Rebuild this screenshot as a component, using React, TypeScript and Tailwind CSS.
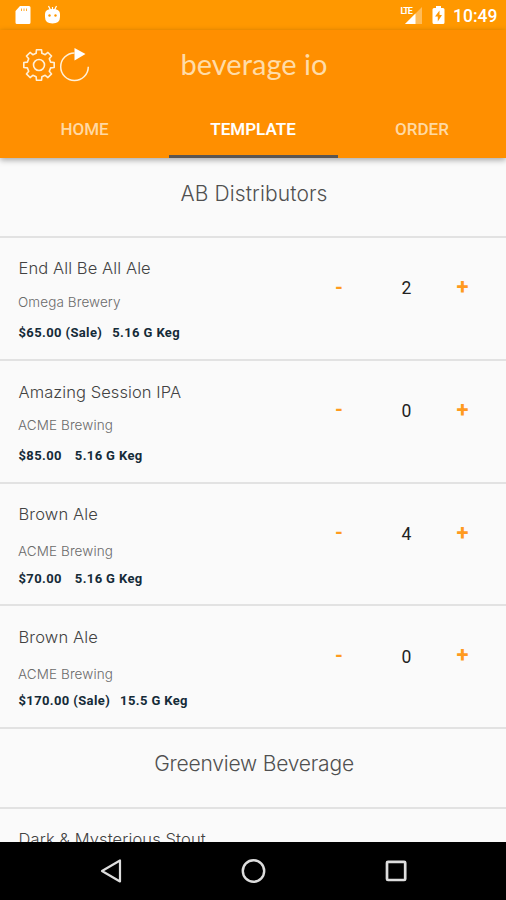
import React from 'react';

interface Beverage {
  id: string;
  name: string;
  brewery: string;
  price: string;
  size: string;
  quantity: number;
  nameClass: string;
  breweryClass: string;
  gapClass: string;
}

const beverages: Beverage[] = [
  { id: 'bev-1', name: 'End All Be All Ale', brewery: 'Omega Brewery', price: '$65.00 (Sale)', size: '5.16 G Keg', quantity: 2, nameClass: 'tracking-[0.1px]', breweryClass: 'mt-[14px] mb-[13px]', gapClass: 'gap-[10px]' },
  { id: 'bev-2', name: 'Amazing Session IPA', brewery: 'ACME Brewing', price: '$85.00', size: '5.16 G Keg', quantity: 0, nameClass: 'tracking-[0.07px] pt-px', breweryClass: 'mt-[13px] mb-[13px]', gapClass: 'gap-[13px]' },
  { id: 'bev-3', name: 'Brown Ale', brewery: 'ACME Brewing', price: '$70.00', size: '5.16 G Keg', quantity: 4, nameClass: 'tracking-[0.15px]', breweryClass: 'mt-[17px] mb-2.5', gapClass: 'gap-[13px]' },
  { id: 'bev-4', name: 'Brown Ale', brewery: 'ACME Brewing', price: '$170.00 (Sale)', size: '15.5 G Keg', quantity: 0, nameClass: 'tracking-[0.15px] pt-px', breweryClass: 'mt-[17px] mb-[9px]', gapClass: 'gap-[10px]' },
];

const tabs = ['HOME', 'TEMPLATE', 'ORDER'];

// Outline of an eight-toothed gear around (17, 17)
const gearPath = () => {
  const points: string[] = [];
  for (let i = 0; i < 8; i++) {
    [[-14, 12], [-9.5, 15.4], [9.5, 15.4], [14, 12]].forEach(([deg, r]) => {
      const a = ((i * 45 + deg - 90) * Math.PI) / 180;
      points.push(`${(17 + r * Math.cos(a)).toFixed(2)} ${(17 + r * Math.sin(a)).toFixed(2)}`);
    });
  }
  return `M${points.join('L')}Z`;
};

const StatusBar: React.FC = () => (
  <div className="flex h-[30px] shrink-0 items-center bg-[#ff9800] pl-[15px] pr-[9px] text-white">
    {/* SD card */}
    <svg width="16" height="20" viewBox="0 0 16 20" fill="currentColor">
      <path d="M5 1h9a1.500 1.500 0 0 1 1.500 1.500v15a1.500 1.500 0 0 1-1.500 1.500H2a1.500 1.500 0 0 1-1.500-1.500V6z" />
      <path d="M6.500 3.500v2.500M9 3.500v2.500M11.500 3.500v2.500" stroke="#ff9800" strokeWidth="1" opacity=".8" />
    </svg>
    {/* Debug robot */}
    <svg className="ml-[13px]" width="17" height="20" viewBox="0 0 17 20" fill="currentColor">
      <path d="M4.500 1l2 4M12.500 1l-2 4M8.500 2v3" stroke="currentColor" strokeWidth="1.200" />
      <path d="M1 9q0-5 7.500-5T16 9v3q0 6.500-7.500 6.500T1 12z" />
      <circle cx="5.500" cy="10.500" r="1.200" fill="#ff9800" />
      <circle cx="11.500" cy="10.500" r="1.200" fill="#ff9800" />
    </svg>
    <div className="grow" />
    {/* LTE signal */}
    <div className="relative h-[20px] w-[23px]">
      <svg width="23" height="20" viewBox="0 0 23 20" fill="currentColor">
        <path d="M22 2v17H5z" opacity=".35" />
        <path d="M15.500 8.500V19H5z" />
      </svg>
      <span className="absolute left-[0.5px] top-[1px] font-['Roboto',sans-serif] text-[9px] font-bold leading-[10px] tracking-[-1.1px]">LTE</span>
    </div>
    {/* Battery */}
    <svg className="ml-[9px]" width="13" height="20" viewBox="0 0 13 20" fill="currentColor">
      <path d="M4 1h5v2h2q1.500 0 1.500 1.500v13Q12.500 19 11 19H2Q.5 19 .5 17.500v-13Q.5 3 2 3h2z" />
      <path d="M7.500 5.500L3 11.500h2.800v5l4.200-6.500H7.500z" fill="#ff9800" />
    </svg>
    <span className="ml-[8px] mt-[2px] w-[44px] whitespace-nowrap font-['Roboto',sans-serif] text-[17.500px] font-medium leading-5">10:49</span>
  </div>
);

const Header: React.FC = () => (
  <header className="relative h-[128px] shrink-0 bg-[#ff8f00] shadow-[0_2px_6px_rgba(0,0,0,0.35)]">
    <div className="grid h-[70px] grid-cols-[1fr_auto_1fr] items-center">
      <div className="flex pl-[22px] text-[#fff0d8]">
        <svg width="34" height="34" viewBox="0 0 34 34" fill="none" stroke="currentColor" strokeWidth="1.600" strokeLinejoin="round">
          <path d={gearPath()} />
          <circle cx="17" cy="17" r="5.500" />
        </svg>
        <svg className="ml-[2px]" width="34" height="34" viewBox="0 0 34 34" fill="none">
          <path d="M16.500 5A13.800 13.800 0 1 0 30.300 18.800" stroke="currentColor" strokeWidth="1.500" />
          <path d="M16.500 0v12.500L27.500 6z" fill="#fff" />
        </svg>
      </div>
      <h1 className="pb-[2px] pl-[2px] font-['Lato',sans-serif] text-[29px] leading-9 text-[#ffdca8]">beverage io</h1>
    </div>
    <nav className="grid h-[58px] grid-cols-[169px_169px_168px] font-['Roboto',sans-serif] text-[17px] font-medium">
      {tabs.map((tab) => (
        <div
          key={tab}
          className={
            tab === 'TEMPLATE'
              ? 'flex items-center justify-center border-b-[3px] border-[#5b5550] pt-[4px] pr-px font-semibold text-white'
              : 'flex items-center justify-center border-b-[3px] border-transparent pt-[4px] text-[#ffd9a3]'
          }
        >
          {tab}
        </div>
      ))}
    </nav>
  </header>
);

const SectionTitle: React.FC<{ title: string; className: string }> = ({ title, className }) => (
  <h2 className={`flex h-[80px] shrink-0 items-center justify-center border-b-2 border-[#e2e2e2] font-['Inter',sans-serif] text-[21px] font-light text-[#505050] ${className}`}>
    {title}
  </h2>
);

const BeverageRow: React.FC<{ beverage: Beverage }> = ({ beverage }) => (
  <div className="flex h-[122.75px] shrink-0 border-b-2 border-[#e2e2e2]">
    <div className="w-[318px] whitespace-nowrap pl-[18.500px] pt-[20px]">
      <div className={`font-['Inter',sans-serif] text-[16.500px] font-light leading-5 text-[#424242] ${beverage.nameClass}`}>{beverage.name}</div>
      <div className={`-ml-[0.5px] font-['Inter',sans-serif] text-[13.500px] font-light leading-5 tracking-[0.1px] text-[#6a6a6a] ${beverage.breweryClass}`}>{beverage.brewery}</div>
      <div className={`flex font-['Roboto',sans-serif] text-[13px] font-bold leading-4 tracking-[0.38px] text-[#152b38] ${beverage.gapClass}`}>
        <span>{beverage.price}</span>
        <span>{beverage.size}</span>
      </div>
    </div>
    <div className="flex h-[100px] items-center font-['Roboto',sans-serif] text-[17.500px]">
      <button className="w-[42px] pb-[3px] text-[20px] font-bold text-[#ff9a1f]">-</button>
      <span className="w-[93px] pt-px text-center text-[#222]">{beverage.quantity}</span>
      <button className="w-[19px] pb-[3px] text-[22px] font-bold text-[#ff9a1f]">+</button>
    </div>
  </div>
);

const NavigationBar: React.FC = () => (
  <div className="flex h-[58px] shrink-0 items-center bg-black">
    <svg className="ml-[99px]" width="26" height="26" viewBox="0 0 26 26" fill="none" stroke="#ddd" strokeWidth="2.200" strokeLinejoin="round">
      <path d="M21 2.500v21L3 13z" />
    </svg>
    <svg className="ml-[115px]" width="26" height="26" viewBox="0 0 26 26" fill="none" stroke="#ddd" strokeWidth="2.400">
      <circle cx="13.500" cy="13" r="10.700" />
    </svg>
    <svg className="ml-[117px]" width="26" height="26" viewBox="0 0 26 26" fill="none" stroke="#ddd" strokeWidth="2.700">
      <rect x="4" y="3.800" width="18.200" height="18.200" rx="1" />
    </svg>
  </div>
);

const App: React.FC = () => (
  <div className="flex h-[900px] w-[506px] flex-col overflow-hidden bg-[#fafafa]">
    <StatusBar />
    <Header />
    <main className="flex min-h-0 flex-1 flex-col overflow-hidden">
      <SectionTitle title="AB Distributors" className="pb-[6px] pl-[2px] tracking-[0.12px]" />
      {beverages.map((beverage) => (
        <BeverageRow key={beverage.id} beverage={beverage} />
      ))}
      <SectionTitle title="Greenview Beverage" className="pb-[8px] pl-[2px] tracking-[-0.2px]" />
      <div className="shrink-0 whitespace-nowrap pl-[18.500px] pt-[20px] font-['Inter',sans-serif] text-[16.500px] font-light leading-5 tracking-[0.12px] text-[#424242]">
        Dark &amp; Mysterious Stout
      </div>
    </main>
    <NavigationBar />
  </div>
);

export default App;
